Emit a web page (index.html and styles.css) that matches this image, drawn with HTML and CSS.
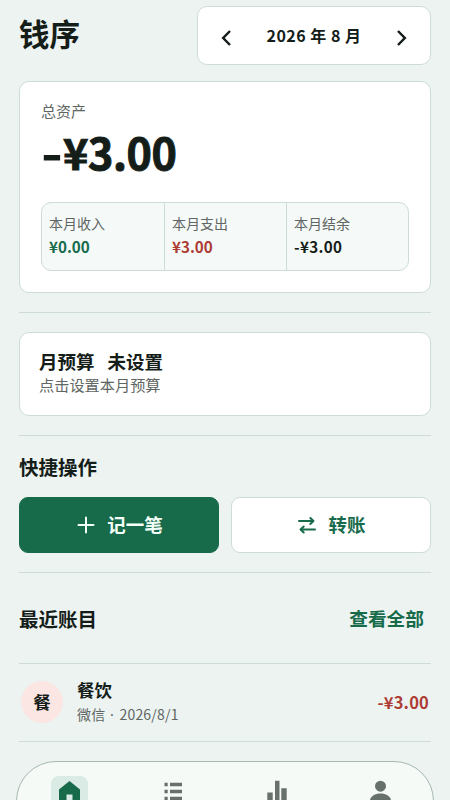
FILE: index.html
```html
<!DOCTYPE html>
<html lang="zh-CN">
<head>
<meta charset="utf-8">
<meta name="viewport" content="width=device-width, initial-scale=1">
<title>钱序</title>
<link rel="stylesheet" href="styles.css">
</head>
<body>
<main class="page">
  <header class="top">
    <h1 class="brand">钱序</h1>
    <div class="month">
      <svg class="chevron" viewBox="0 0 12 18"><path d="M10 2 3.200 9l6.800 7"/></svg>
      <span class="month-name">2026 年 8 月</span>
      <svg class="chevron" viewBox="0 0 12 18"><path d="M2 2 8.800 9 2 16"/></svg>
    </div>
  </header>
  <section class="card assets">
    <div class="assets-label">总资产</div>
    <div class="assets-total"><span class="minus">-</span>¥3.00</div>
    <div class="stats">
      <div class="stat"><span class="stat-label">本月收入</span><b class="income">¥0.00</b></div>
      <div class="stat"><span class="stat-label">本月支出</span><b class="expense">¥3.00</b></div>
      <div class="stat"><span class="stat-label">本月结余</span><b class="balance">-¥3.00</b></div>
    </div>
  </section>
  <section class="section budget-section">
    <div class="card budget">
      <div class="budget-title"><span>月预算</span><span>未设置</span></div>
      <div class="budget-hint">点击设置本月预算</div>
    </div>
  </section>
  <section class="section quick">
    <h2 class="heading">快捷操作</h2>
    <div class="actions">
      <button class="action primary"><svg class="icon plus" viewBox="0 0 18 18"><path d="M9 1.500v15M1.500 9h15"/></svg><span>记一笔</span></button>
      <button class="action"><svg class="icon swap" viewBox="0 0 18 18"><path d="M1 5h14.500M12.300 2 15.500 5l-3.200 3M17 13.500H2.500M5.700 10.500 2.500 13.500l3.200 3"/></svg><span>转账</span></button>
    </div>
  </section>
  <section class="section recent">
    <h2 class="heading">最近账目</h2>
    <a class="all">查看全部</a>
  </section>
  <article class="entry">
    <div class="avatar">餐</div>
    <div class="entry-info"><b class="entry-name">餐饮</b><span class="entry-meta">微信<span class="dot"> · </span>2026/8/1</span></div>
    <b class="entry-amount">-¥3.00</b>
  </article>
  <nav class="tabs">
    <div class="tab active"><svg viewBox="0 0 37 37"><path fill-rule="evenodd" d="M18.500 5 29 13.500V30H8V13.500ZM15.500 18.500V30h6V18.500Z"/></svg></div>
    <div class="tab"><svg viewBox="0 0 37 37"><path d="M9.500 6.700h3.200v3.500H9.500zm5.500 0h12v3.500H15zM9.500 13.700h3.200v3.500H9.500zm5.500 0h12v3.500H15zM9.500 20.700h3.200v3.500H9.500zm5.500 0h12v3.500H15z"/></svg></div>
    <div class="tab"><svg viewBox="0 0 37 37"><path d="M8.300 16.500h5.400V30H8.300zM16 4.700h4.500V30H16zM22.300 12.300h5.400V30h-5.400z"/></svg></div>
    <div class="tab"><svg viewBox="0 0 37 37"><circle cx="17.500" cy="10.200" r="5.500"/><path d="M7 24c1-4 5-6.500 10.500-6.500S27 20 28 24v4H7z"/></svg></div>
  </nav>
</main>
</body>
</html>
```
FILE: styles.css
```css
* { box-sizing: border-box; }
html, body { margin: 0; height: 100%; overflow: hidden; }
body {
  background: #ecf3f1;
  color: #151d19;
  font-family: "Noto Sans CJK SC", "Noto Sans", sans-serif;
}
h1, h2 { margin: 0; }
.page { height: 800px; padding: 6px 19px 0; display: flex; flex-direction: column; overflow: hidden; }
.page > * { flex-shrink: 0; }
.top { display: flex; justify-content: space-between; height: 59px; }
.brand { font-size: 30.5px; line-height: 54px; font-weight: 700; }
.month {
  width: 234px; height: 59px; padding: 0 22px;
  display: flex; align-items: center; justify-content: space-between;
  background: #fff; border: 1px solid #cedcd8; border-radius: 10px;
}
.chevron { width: 12px; height: 18px; margin-top: 4px; fill: none; stroke: #151d19; stroke-width: 2.5; }
.month-name { font-size: 16px; font-weight: 700; line-height: 24px; margin-top: -1px; white-space: nowrap; letter-spacing: .5px; }
.card { background: #fff; border: 1px solid #cedcd8; border-radius: 10px; }
.assets { margin-top: 16px; height: 212px; padding: 17px 21px 21px; }
.assets-label { font-size: 15px; line-height: 24px; color: #606663; }
.assets-total {
  height: 56px; line-height: 56px; margin-bottom: 23px;
  display: flex; align-items: center;
  font-size: 43px; font-weight: 700; letter-spacing: -.4px;
  -webkit-text-stroke: 1px currentColor;
}
.minus { width: 22px; text-align: center; letter-spacing: 0; transform: scaleX(1.28); }
.stats {
  height: 69px; display: grid; grid-template-columns: repeat(3, 1fr);
  border: 1px solid #cedcd8; border-radius: 10px; background: #f5f9f8; overflow: hidden;
}
.stat { padding: 9px 7px; display: flex; flex-direction: column; }
.stat + .stat { border-left: 1px solid #cedcd8; }
.stat-label { font-size: 14px; line-height: 23px; color: #606663; }
.stat b { font-size: 15.2px; line-height: 23px; }
.stat .income { color: #176b4b; }
.stat .expense { color: #ad3c34; }
.stat .balance { letter-spacing: .3px; }
.section { border-top: 1px solid #cedcd8; }
.budget-section { margin-top: 19px; padding-top: 19px; }
.budget { height: 84px; padding: 15px 19px; }
.budget-title { display: flex; gap: 13px; font-size: 18.5px; line-height: 26px; font-weight: 700; }
.budget-hint { font-size: 15.2px; line-height: 20px; color: #606663; }
.quick { margin-top: 19px; }
.heading { font-size: 19.5px; line-height: 61px; font-weight: 700; }
.actions { display: grid; grid-template-columns: 1fr 1fr; gap: 12px; }
.action {
  height: 56px; padding: 0 0 0 2px; display: flex; align-items: center; justify-content: center; gap: 12px;
  border: 1px solid #cedcd8; border-radius: 9px; background: #fff; color: #176b4b;
  font: 700 18.5px/28px "Noto Sans CJK SC", sans-serif;
}
.action span { margin-top: -2px; }
.primary { background: #176b4b; border-color: #176b4b; color: #f3fff9; }
.icon { width: 18px; height: 18px; fill: none; stroke: currentColor; stroke-width: 2; stroke-linecap: round; stroke-linejoin: round; }
.recent { margin-top: 19px; height: 91px; display: flex; justify-content: space-between; align-items: center; }
.all { color: #176b4b; font-size: 18.7px; font-weight: 700; padding-right: 7px; margin-top: -1px; }
.entry { height: 79px; border: solid #cedcd8; border-width: 1px 0; display: flex; align-items: center; padding: 0 2px; }
.avatar { width: 42px; height: 42px; margin-top: -1px; border-radius: 50%; background: #fbe6e3; display: grid; place-items: center; font-size: 17.5px; font-weight: 700; line-height: 24px; }
.entry-info { margin: -2px 0 0 14px; flex: 1; display: flex; flex-direction: column; }
.entry-name { font-size: 17.5px; line-height: 26px; }
.entry-meta { font-size: 14px; line-height: 23px; color: #606663; white-space: pre; letter-spacing: .2px; }
.dot { font-family: "Noto Sans", sans-serif; letter-spacing: 1px; }
.entry-amount { font-size: 16.5px; letter-spacing: .2px; margin: -2px 0 0; color: #ad3c34; }
.tabs {
  height: 80px; margin: 19px -3px 0; padding: 14px 0 0;
  display: grid; grid-template-columns: repeat(4, 1fr); justify-items: center; align-items: start;
  background: #f5faf7; border: 1px solid #a5b8b1; border-radius: 40px;
}
.tab { width: 37px; height: 37px; border-radius: 8px; fill: #68706c; }
.tab svg { display: block; width: 100%; height: 100%; }
.active { background: #d9ebe4; fill: #176b4b; }
```
